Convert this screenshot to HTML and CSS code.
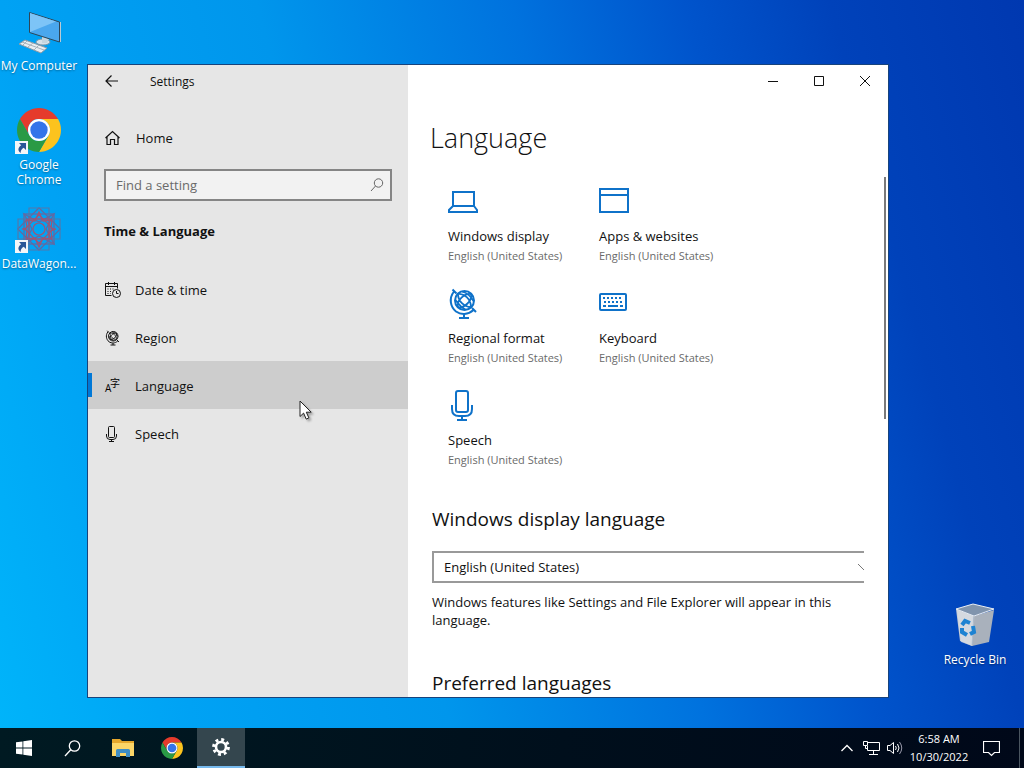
FILE: index.html
```
<!DOCTYPE html>
<html lang="en">
<head>
  <meta charset="UTF-8" />
  <meta name="viewport" content="width=device-width, initial-scale=1.0" />
  <title>Settings</title>
  <link rel="stylesheet" href="styles.css">
</head>
<body>

  <!-- Shared drawings -->
  <svg class="defs" width="0" height="0">
    <symbol id="chrome" viewBox="0 0 48 48">
      <path fill="#e53b2c" d="M24 12H44.78A24 24 0 0 0 3.22 12L13.6 30A12 12 0 0 1 24 12Z"/>
      <path fill="#fcc31e" d="M34.39 30L24 48A24 24 0 0 0 44.78 12H24A12 12 0 0 1 34.39 30Z"/>
      <path fill="#2a9a45" d="M13.6 30L3.22 12A24 24 0 0 0 24 48L34.39 30A12 12 0 0 1 13.6 30Z"/>
      <circle cx="24" cy="24" r="12" fill="#fff"/>
      <circle cx="24" cy="24" r="9.5" fill="#3474ea"/>
    </symbol>
    <symbol id="shortcut" viewBox="0 0 13 13">
      <path fill="#f4f6f8" d="M0 0h13v13H0z"/>
      <path fill="#2b5797" d="M4 2h7v7L8.700 6.800C6.500 8.300 5.700 9.500 5.600 12 2.300 9.500 3 6.500 6.200 4.300z"/>
    </symbol>
    <symbol id="globe" viewBox="0 0 32 32">
      <g fill="none" stroke="currentColor" stroke-width="2">
        <circle cx="16.500" cy="12.500" r="9.500"/>
        <path d="M4.500 1.500l4 4M24 20l4 4M6 3.500C0.500 10.500 2.500 19 8 23.500c5 3.500 12 3.500 17.500 -1.500M16 26v4M11 30h10"/>
        <path stroke-width="1.800" d="M10 19C8 13 17 4.500 23 6M10 19c6 2 15-7 13-13M10 6c0 7 6 13 13 13M7.500 12c3 4 6 8 10 9.500M14 3.500c5 1.500 9 5 11.500 9.500M10 6c6-1 13 5 13 13"/>
      </g>
    </symbol>
    <symbol id="mic" viewBox="0 0 32 32">
      <g fill="none" stroke="currentColor" stroke-width="2">
        <rect x="8" y="1" width="12" height="21" rx="2"/>
        <path d="M4 15v4q0 7 7 7h6q7 0 7-7v-4M14 26v4M9 30h10"/>
      </g>
    </symbol>
  </svg>

  <div class="desktop">

    <div class="shortcuts">
      <a href="#" class="shortcut">
        <svg width="48" height="48" viewBox="0 0 48 48">
          <path fill="#e9eef2" stroke="#8d9aa5" d="M4 36l6-4 22 8-6 5z"/>
          <path stroke="#a7b2bb" fill="none" d="M7 34l22 8M12 33l-4 4M18 35l-5 4M24 37l-5 5"/>
          <ellipse cx="28" cy="34" rx="7" ry="3" fill="#d7e2ea" stroke="#7f95a5"/>
          <path fill="#c5d5df" d="M27 28l7 3-2 4h-5z"/>
          <path fill="#4aa7ee" stroke="#2e4657" d="M14.500 4.500L44.500 14v20L14.500 24.500z"/>
          <path fill="#7dc4f7" d="M15 5l26 8.500L15 24z"/>
          <path fill="none" stroke="#b9cad5" d="M45.500 14v20"/>
        </svg>
        <span>My Computer</span>
      </a>
      <a href="#" class="shortcut">
        <svg width="48" height="48" viewBox="0 0 48 48">
          <use href="#chrome" x="2" y="1" width="44" height="44"/>
          <use href="#shortcut" x="0" y="34" width="13" height="13"/>
        </svg>
        <span>Google Chrome</span>
      </a>
      <a href="#" class="shortcut">
        <svg width="48" height="48" viewBox="0 0 48 48">
          <g fill="none" stroke="#65689f" stroke-width="1.200">
            <rect x="9" y="8" width="30" height="30"/>
            <rect x="9" y="8" width="30" height="30" transform="rotate(45 24 23)"/>
            <path d="M14 2h20v42H14zM3 13h42v20H3z" stroke="#5379ab"/>
            <path d="M9 8l15 8L39 8l-8 15 8 15-15-8-15 8 8-15z"/>
            <g stroke="#a05574">
              <rect x="14" y="13" width="20" height="20"/>
              <rect x="14" y="13" width="20" height="20" transform="rotate(45 24 23)"/>
              <path d="M24 6l4 9 9-1-1 9 5 0-5 2 1 8-9-1-4 9-4-9-9 1 1-9-5-1 5-1-1-8 9 1z"/>
              <circle cx="24" cy="23" r="6"/>
            </g>
          </g>
          <use href="#shortcut" x="0" y="34" width="13" height="13"/>
        </svg>
        <span>DataWagon...</span>
      </a>
    </div>

    <a href="#" class="shortcut recycle">
      <svg width="48" height="48" viewBox="0 0 48 48">
        <path fill="#c3cbd5" d="M5 7l18 7-2 30-12-5z"/>
        <path fill="#a9b1bc" d="M23 14l20-6-5 32-17 4z"/>
        <path fill="#dfe3e8" d="M6 8l16 6-1 30-11-4z" opacity=".6"/>
        <path fill="#8094ad" stroke="#e9eef4" d="M5 7l17-5 21 5-20 7z"/>
        <path fill="none" stroke="#b5bfca" d="M23 14l-2 30"/>
        <g fill="none" stroke="#1e83d2" stroke-width="4">
          <path d="M11 23l3-4 5 2M22 24l1 6-4 2M16 33l-5-3v-4"/>
        </g>
      </svg>
      <span>Recycle Bin</span>
    </a>

    <div class="window">
      <aside class="sidebar">
        <div class="titlebar">
          <button class="back" aria-label="Back">
            <svg width="14" height="12" viewBox="0 0 14 12"><path d="M13 6H1M6.500 .5L1 6l5.500 5.500" fill="none" stroke="#111" stroke-width="1.200"/></svg>
          </button>
          <span>Settings</span>
        </div>

        <a href="#" class="home">
          <svg width="16" height="16" viewBox="0 0 16 16"><path d="M1.500 8L8.500 1.500 15.500 8M3 7v7.500h3.500V9.500h4v5H14V7" fill="none" stroke="#111" stroke-width="1.200"/></svg>
          Home
        </a>

        <div class="search">
          <input type="text" placeholder="Find a setting" aria-label="Find a setting" />
          <svg width="14" height="14" viewBox="0 0 14 14"><g fill="none" stroke="#666"><circle cx="8.500" cy="5" r="4.200"/><path d="M5.500 8L1 13"/></g></svg>
        </div>

        <h2>Time &amp; Language</h2>

        <nav>
          <a href="#">
            <svg width="16" height="16" viewBox="0 0 16 16">
              <g fill="none" stroke="#111">
                <path d="M6.500 13.500h-6v-12h12v5M.5 4.500h12M3.500 0v3M9.500 0v3"/>
                <circle cx="11.500" cy="11.500" r="4"/>
                <path d="M11.500 9v2.500h2"/>
                <path stroke-dasharray="1 1.500" d="M2.500 7h7M2.500 9.500h4M2.500 11.500h3"/>
              </g>
            </svg>
            Date &amp; time
          </a>
          <a href="#">
            <svg width="16" height="16"><use href="#globe" width="16" height="16"/></svg>
            Region
          </a>
          <a href="#" class="active">
            <svg class="lang" width="16" height="16" viewBox="0 0 16 16">
              <text x="0" y="14" font-size="10">A</text>
              <text x="5" y="9" font-size="10">字</text>
            </svg>
            Language
          </a>
          <a href="#">
            <svg width="16" height="16" viewBox="0 0 16 16"><g fill="none" stroke="#111"><rect x="3.500" y=".5" width="6" height="11" rx="1"/><path d="M1.500 8v2q0 3.500 3.500 3.500h3q3.500 0 3.500-3.500V8M6.500 13.500v2M4 15.500h5"/></g></svg>
            Speech
          </a>
        </nav>
      </aside>

      <main>
        <div class="controls">
          <button aria-label="Minimize"><svg width="10" height="10"><path d="M0 5.500h10" stroke="#111"/></svg></button>
          <button aria-label="Maximize"><svg width="10" height="10"><path d="M.5 .5h9v9h-9z" stroke="#111" fill="none"/></svg></button>
          <button aria-label="Close"><svg width="10" height="10"><path d="M0 0l10 10M10 0L0 10" stroke="#111"/></svg></button>
        </div>

        <h1>Language</h1>

        <div class="scroller">
          <div class="content">
            <div class="tiles">
              <a href="#">
                <svg width="32" height="32" viewBox="0 0 32 32"><path d="M5 6h21v14H5zM5 20l-4 4v2h28v-2l-3-4" fill="none" stroke="currentColor" stroke-width="2"/></svg>
                <strong>Windows display</strong>
                <small>English (United States)</small>
              </a>
              <a href="#">
                <svg width="32" height="32" viewBox="0 0 32 32"><path d="M1 3h28v23H1zM1 9h28" fill="none" stroke="currentColor" stroke-width="2"/></svg>
                <strong>Apps &amp; websites</strong>
                <small>English (United States)</small>
              </a>
              <a href="#">
                <svg width="32" height="32"><use href="#globe" width="32" height="32"/></svg>
                <strong>Regional format</strong>
                <small>English (United States)</small>
              </a>
              <a href="#">
                <svg width="32" height="32" viewBox="0 0 32 32">
                  <g fill="none" stroke="currentColor" stroke-width="2">
                    <rect x="1" y="6" width="26" height="16" rx="1"/>
                    <path stroke-dasharray="2 2" d="M4 10h20M5 14h19"/>
                    <path d="M4 18h3M9 18h10M21 18h3"/>
                  </g>
                </svg>
                <strong>Keyboard</strong>
                <small>English (United States)</small>
              </a>
              <a href="#">
                <svg width="32" height="32"><use href="#mic" width="32" height="32"/></svg>
                <strong>Speech</strong>
                <small>English (United States)</small>
              </a>
            </div>

            <h2><label for="displayLanguage">Windows display language</label></h2>
            <div class="dropdown">
              <select id="displayLanguage">
                <option>English (United States)</option>
              </select>
              <svg width="14" height="8" viewBox="0 0 14 8"><path d="M1 1l6 6 6-6" fill="none" stroke="#777"/></svg>
            </div>
            <p>Windows features like Settings and File Explorer will appear in this language.</p>

            <h2 class="preferred">Preferred languages</h2>
          </div>
          <div class="scrollbar"></div>
        </div>
      </main>
    </div>

    <svg class="cursor" width="16" height="22" viewBox="0 0 16 22"><path d="M1 1v15.500l3.600-3.400 2.600 6 2.700-1.200-2.600-5.700h4.900z" fill="#fff" stroke="#222"/></svg>
  </div>

  <footer class="taskbar">
    <button aria-label="Start">
      <svg width="16" height="16" viewBox="0 0 16 16"><path fill="#fff" d="M0 2.300l6.500-.9v6.200H0zM7.300 1.300L16 0v7.600H7.300zM0 8.400h6.500v6.200L0 13.700zM7.300 8.400H16V16l-8.700-1.300z"/></svg>
    </button>
    <button aria-label="Search">
      <svg width="17" height="17" viewBox="0 0 17 17"><g fill="none" stroke="#fff" stroke-width="1.300"><circle cx="10.500" cy="6" r="5.200"/><path d="M6.800 9.800L1 16"/></g></svg>
    </button>
    <div class="apps">
      <button aria-label="File Explorer">
        <svg width="22" height="18" viewBox="0 0 22 18">
          <path fill="#e5a72c" d="M0 0h8l2 2h12v4H0z"/>
          <path fill="#fcd667" d="M0 4h22v13H0z"/>
          <path fill="#3f8ec4" d="M4 18v-6.500q0-1.500 1.500-1.500h11q1.500 0 1.500 1.500V18h-4v-4H8v4z"/>
        </svg>
      </button>
      <button aria-label="Google Chrome"><svg width="22" height="22"><use href="#chrome" width="22" height="22"/></svg></button>
      <button class="open" aria-label="Settings">
        <svg width="18" height="18" viewBox="0 0 18 18">
          <g fill="none" stroke="#fff">
            <circle cx="9" cy="9" r="5" stroke-width="2.600"/>
            <circle cx="9" cy="9" r="7.400" stroke-width="3" stroke-dasharray="2.900 2.910"/>
          </g>
        </svg>
      </button>
    </div>

    <div class="tray">
      <button aria-label="Show hidden icons"><svg width="12" height="8" viewBox="0 0 12 8"><path d="M.5 7L6 1.500 11.500 7" fill="none" stroke="#fff" stroke-width="1.300"/></svg></button>
      <button aria-label="Network">
        <svg width="17" height="14" viewBox="0 0 17 14"><g fill="none" stroke="#fff"><path d="M5 1.500h11.500v8H4.500V5M10.500 9.500v4M6 13.500h9"/><path d="M.5 .5h4v4h-4zM2.500 4.500v3h2"/></g></svg>
      </button>
      <button aria-label="Volume">
        <svg width="16" height="14" viewBox="0 0 16 14"><g fill="none" stroke="#fff"><path d="M.5 4.500h2.500L6.500 1.500v11L3 9.500H.5z"/><path d="M8.500 5q1.500 2 0 4M10.500 3q3 4 0 8"/><path stroke="#99a" d="M12.500 1q4.500 6 0 12"/></g></svg>
      </button>
      <div class="clock">
        <time>6:58 AM</time>
        <time>10/30/2022</time>
      </div>
      <button class="notes" aria-label="Notifications">
        <svg width="17" height="17" viewBox="0 0 17 17"><path d="M.5 1.500h16v11h-5L8.500 15.500l-3-3h-5z" fill="none" stroke="#fff" stroke-width="1.200"/></svg>
      </button>
      <div class="peek"></div>
    </div>
  </footer>

</body>
</html>
```
FILE: styles.css
```
* {
  box-sizing: border-box;
}

body {
  margin: 0;
  height: 100vh;
  display: flex;
  flex-direction: column;
  overflow: hidden;
  font-family: "Open Sans", "Noto Sans", "Noto Sans CJK SC", sans-serif;
  font-size: 13px;
  line-height: 20px;
  color: #111;
}

a {
  color: inherit;
  text-decoration: none;
}

button {
  display: flex;
  align-items: center;
  justify-content: center;
  padding: 0;
  border: none;
  background: none;
}

h1,
h2,
p {
  margin: 0;
}

.defs {
  position: absolute;
}

/* Desktop */
.desktop {
  position: relative;
  flex: 1;
  background: linear-gradient(75deg, #00b4fa 0%, #00a2f4 16%, #0096ec 37%, #0072de 58%, #0054cc 72%, #0042ba 84%, #0038b0 100%);
}

.shortcuts {
  display: flex;
  flex-direction: column;
  gap: 19px;
  width: 78px;
  padding-top: 8px;
}

.shortcut {
  display: flex;
  flex-direction: column;
  align-items: center;
  gap: 2px;
  width: 78px;
  font-size: 12px;
  line-height: 15px;
  text-align: center;
  color: #fff;
  text-shadow: 0 1px 2px rgba(0, 0, 0, 0.4);
}

.shortcut span {
  min-height: 30px;
}

.recycle {
  position: absolute;
  right: 10px;
  bottom: 46px;
}

.cursor {
  position: absolute;
  left: 299px;
  top: 400px;
  filter: drop-shadow(2px 2px 1px rgba(0, 0, 0, 0.3));
}

/* Settings window */
.window {
  position: absolute;
  left: 87px;
  top: 64px;
  right: 135px;
  bottom: 30px;
  display: grid;
  grid-template-columns: 320px 1fr;
  border: 1px solid #17437c;
  background: #fff;
  overflow: hidden;
}

.sidebar {
  background: #e6e6e6;
}

.titlebar {
  display: flex;
  align-items: center;
  height: 32px;
  font-size: 12px;
}

.titlebar span {
  padding-top: 2px;
}

.back {
  width: 48px;
  height: 32px;
  margin-right: 14px;
}

.home {
  display: flex;
  align-items: center;
  gap: 16px;
  height: 48px;
  margin-top: 17px;
  padding-left: 16px;
}

.search {
  display: flex;
  align-items: center;
  height: 32px;
  margin: 7px 16px 20px;
  padding: 0 6px 0 10px;
  border: 2px solid #858585;
  background: #f2f2f2;
}

.search input {
  flex: 1;
  min-width: 0;
  padding: 0;
  border: none;
  background: none;
  font: inherit;
}

.search input::placeholder {
  color: #6a6a6a;
}

.sidebar h2 {
  margin: 0 16px 24px;
  font-size: 13px;
  font-weight: 700;
}

nav a {
  display: flex;
  align-items: center;
  gap: 14px;
  height: 48px;
  padding: 2px 0 0 17px;
}

nav .active {
  background: linear-gradient(#0078d7, #0078d7) left center / 4px 24px no-repeat #cdcdcd;
}

.lang {
  overflow: visible;
}

main {
  display: flex;
  flex-direction: column;
  min-width: 0;
  min-height: 0;
}

.controls {
  display: flex;
  justify-content: flex-end;
}

.controls button {
  width: 46px;
  height: 32px;
}

h1 {
  margin: 21px 22px 19px;
  font-size: 27px;
  line-height: 40px;
  font-weight: 300;
}

.scroller {
  flex: 1;
  display: flex;
  justify-content: space-between;
  min-height: 0;
  overflow: hidden;
}

.content {
  flex: 1;
  min-width: 0;
  margin-right: 20px;
  padding: 9px 0 0 24px;
  overflow: hidden;
}

.scrollbar {
  width: 2px;
  height: 242px;
  margin-right: 2px;
  background: #7a7a7a;
}

.tiles {
  display: grid;
  grid-template-columns: repeat(auto-fill, 135px);
  gap: 22px 16px;
  max-width: 400px;
  margin-bottom: 35px;
  padding-left: 16px;
}

.tiles a {
  display: flex;
  flex-direction: column;
}

.tiles svg {
  margin-bottom: 8px;
  color: #0f72c9;
}

.tiles strong {
  font-weight: 400;
}

.tiles small {
  font-size: 11px;
  color: #6a6a6a;
}

.content h2 {
  font-size: 19px;
  line-height: 28px;
  font-weight: 400;
}

/* The box runs past the visible area and is cut off there */
.dropdown {
  position: relative;
  margin: 18px -18px 10px 0;
}

.dropdown select {
  display: block;
  width: 100%;
  height: 32px;
  padding: 0 10px;
  border: 2px solid #999;
  border-radius: 0;
  background: #fff;
  color: #111;
  font: inherit;
  appearance: none;
}

.dropdown svg {
  position: absolute;
  right: 11px;
  top: 12px;
}

.content p {
  line-height: 18px;
}

.content .preferred {
  margin-top: 40px;
}

/* Taskbar */
.taskbar {
  display: flex;
  height: 40px;
  background: linear-gradient(90deg, #001a22, #000f1c 55%, #000819);
  color: #fff;
}

.taskbar > button,
.apps button {
  width: 48px;
  height: 40px;
}

.apps {
  display: flex;
  gap: 1px;
  margin-left: 3px;
}

.apps .open {
  border-bottom: 2px solid #76b9ed;
  background: #34464e;
}

.tray {
  display: flex;
  margin-left: auto;
}

.tray button {
  width: 24px;
}

.clock {
  display: flex;
  flex-direction: column;
  justify-content: center;
  width: 64px;
  font-size: 11px;
  line-height: 18px;
  text-align: center;
}

.tray .notes {
  width: 40px;
}

.peek {
  width: 5px;
  margin-left: 8px;
  border-left: 1px solid #4a5560;
}
```
